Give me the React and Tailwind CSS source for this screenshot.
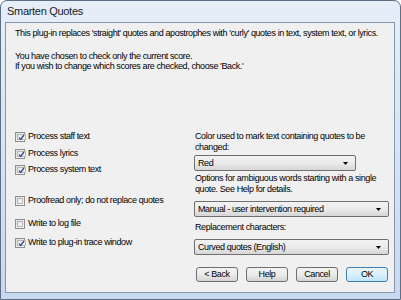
import React from "react";

const font = "font-['Liberation_Sans',Arial,sans-serif]";

function Check({ checked, label, className }) {
  return (
    <div className={"flex items-center h-[12px] " + (className || "")}>
      <span className="w-[10px] h-[10px] border border-[#8e8f8f] bg-gradient-to-br from-[#dcdcdc] to-[#fbfbfb] p-[1px] flex">
        <span className="flex-1 border border-[#b8b8b8] bg-gradient-to-br from-[#e6e6e6] to-[#f6f6f6] flex items-center justify-center">
          {checked && (
            <svg width="7" height="7" viewBox="0 0 7 7">
              <path d="M1 3.6 L2.7 5.4 L6 1" fill="none" stroke="#32498c" strokeWidth="1.3" />
            </svg>
          )}
        </span>
      </span>
      <span className="ml-[3px]">{label}</span>
    </div>
  );
}

function Combo({ value, className }) {
  return (
    <div className={"h-[16px] rounded-[2px] border border-[#707070] bg-gradient-to-b from-[#f2f2f2] via-[#ebebeb] to-[#d6d6d6] flex items-center pl-[3px] pr-[7px] " + className}>
      <span className="flex-1">{value}</span>
      <svg width="5" height="3" viewBox="0 0 5 3">
        <path d="M0 0 H5 L2.5 3 Z" fill="#000" />
      </svg>
    </div>
  );
}

function Button({ label, primary }) {
  return (
    <button
      className={
        "w-[42px] h-[15px] rounded-[3px] border flex items-center justify-center leading-none " +
        (primary
          ? "border-[#3c7fb1] bg-gradient-to-b from-[#eaf6fd] via-[#d9f0fc] to-[#bee6fd]"
          : "border-[#707070] bg-gradient-to-b from-[#f2f2f2] via-[#ebebeb] to-[#d4d4d4]")
      }
    >
      {label}
    </button>
  );
}

export default function App() {
  return (
    <div className={"w-[401px] h-[300px] text-[9px] tracking-[-0.4px] text-black " + font}>
      <div className="w-[401px] h-[300px] rounded-t-[7px] border border-[#5d6f85] bg-gradient-to-b from-[#e6eef8] via-[#d6e4f4] to-[#c6d9ef] flex flex-col">
        <div className="h-[21px] pl-[6px] flex items-center text-[11px] tracking-[-0.3px] text-[#1a1a1a]">Smarten Quotes</div>
        <div className="ml-[4px] w-[390px] h-[271px] border border-[#8497af] bg-[#f0f0f0] flex flex-col pl-[9px] pr-[4px]">
          <div className="mt-[5px] leading-[11px] whitespace-nowrap">
            This plug-in replaces 'straight' quotes and apostrophes with 'curly' quotes in text, system text, or lyrics.
          </div>
          <div className="mt-[12px] leading-[10px]">
            <div>You have chosen to check only the current score.</div>
            <div>If you wish to change which scores are checked, choose 'Back.'</div>
          </div>
          <div className="mt-[60px] flex">
            <div className="w-[179px] flex flex-col">
              <Check checked label="Process staff text" />
              <Check checked label="Process lyrics" className="mt-[5px]" />
              <Check checked label="Process system text" className="mt-[4px]" />
              <Check label="Proofread only; do not replace quotes" className="mt-[19px]" />
              <Check label="Write to log file" className="mt-[11px]" />
              <Check checked label="Write to plug-in trace window" className="mt-[7px]" />
            </div>
            <div className="flex-1 flex flex-col leading-[11px]">
              <div className="pl-[1px] whitespace-nowrap">
                Color used to mark text containing quotes to be
                <br />
                changed:
              </div>
              <Combo value="Red" className="mt-[2px] w-[162px]" />
              <div className="mt-[2px] pl-[1px] whitespace-nowrap">
                Options for ambiguous words starting with a single
                <br />
                quote. See Help for details.
              </div>
              <Combo value="Manual - user intervention required" className="mt-[6px] w-[195px]" />
              <div className="mt-[5px] pl-[1px]">Replacement characters:</div>
              <Combo value="Curved quotes (English)" className="mt-[6px] w-[195px]" />
              <div className="mt-[12px] ml-[2px] flex gap-[8px]">
                <Button label="< Back" />
                <Button label="Help" />
                <Button label="Cancel" />
                <Button label="OK" primary />
              </div>
            </div>
          </div>
        </div>
      </div>
    </div>
  );
}
